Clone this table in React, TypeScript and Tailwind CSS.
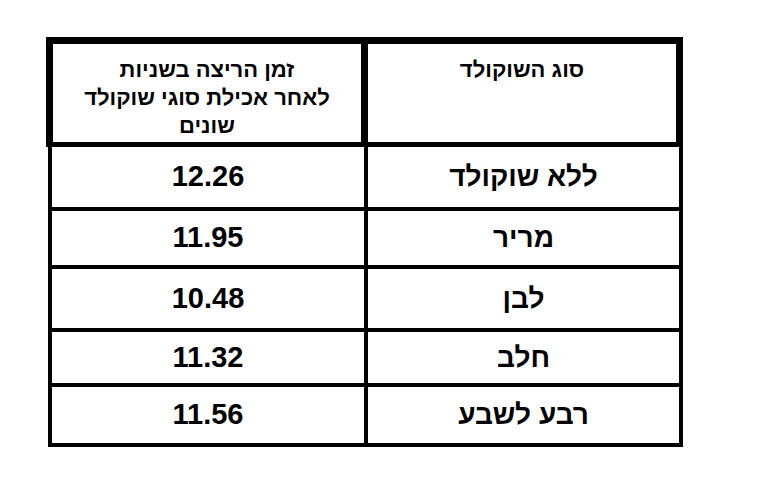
import React from "react";

const rows: { name: string; value: string; h: string }[] = [
  { name: "ללא שוקולד", value: "12.26", h: "h-[64px]" },
  { name: "מריר", value: "11.95", h: "h-[58px]" },
  { name: "לבן", value: "10.48", h: "h-[63px]" },
  { name: "חלב", value: "11.32", h: "h-[55px]" },
  { name: "רבע לשבע", value: "11.56", h: "h-[60px]" },
];

export default function App() {
  return (
    <div
      className="w-[773px] h-[503px] bg-white pt-[37px] pl-[46px]"
      style={{ fontFamily: '"Liberation Sans", Arial, sans-serif' }}
    >
      <div dir="rtl" className="w-[637px] text-black">
        {/* header */}
        <div className="flex h-[110px] border-t-[7px] border-b-[5px] border-x-[7px] border-black">
          <div className="w-[308px] flex justify-center pt-[12px] text-[22px] leading-[28px] font-bold">
            סוג השוקולד
          </div>
          <div className="w-[7px] bg-black" />
          <div className="flex-1 flex flex-col items-center pt-[12px] text-[22px] leading-[28px] font-bold text-center">
            <span>זמן הריצה בשניות</span>
            <span>לאחר אכילת סוגי שוקולד</span>
            <span>שונים</span>
          </div>
        </div>
        {/* body */}
        <div className="ml-[1px] w-[635px] border-x-4 border-black">
          {rows.map((r) => (
            <div key={r.name} className={`flex ${r.h} border-b-4 border-black`}>
              <div className="w-[311px] flex items-center justify-center text-[28px] font-bold">
                {r.name}
              </div>
              <div className="w-[4px] bg-black" />
              <div className="flex-1 flex items-center justify-center text-[29px] font-bold">
                <span dir="ltr">{r.value}</span>
              </div>
            </div>
          ))}
        </div>
      </div>
    </div>
  );
}
